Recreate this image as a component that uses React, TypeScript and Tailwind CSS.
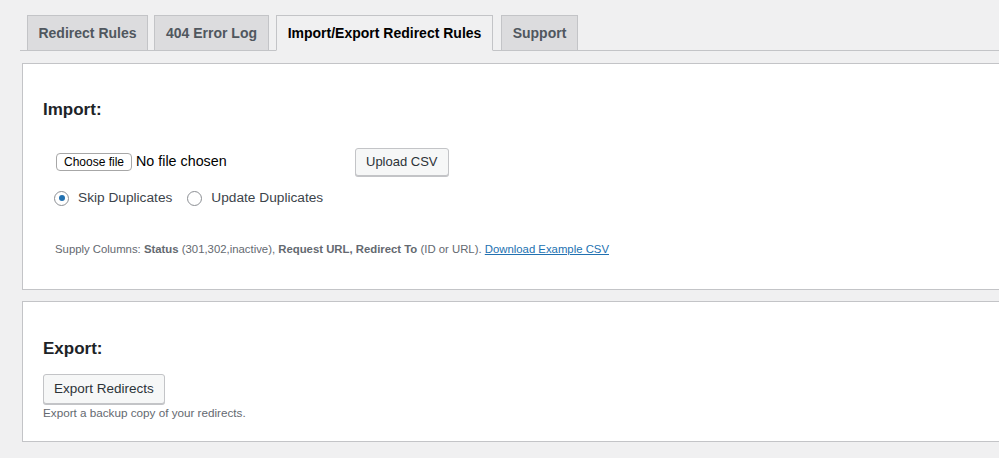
import { useState } from 'react';

const tabs = [
  { label: 'Redirect Rules', cls: 'ml-[7px] w-[121px]' },
  { label: '404 Error Log', cls: 'ml-[6px] w-[115px]' },
  { label: 'Import/Export Redirect Rules', cls: 'ml-[7px] w-[217px]' },
  { label: 'Support', cls: 'ml-[8px] w-[77px]' },
];

function Radio({ checked, label, onClick }: { checked: boolean; label: string; onClick: () => void }) {
  return (
    <label className="flex items-center cursor-pointer" onClick={onClick}>
      <span className="w-[15px] h-[15px] rounded-full border border-[#8c8f94] bg-white flex items-center justify-center">
        {checked && <span className="w-[6px] h-[6px] rounded-full bg-[#2271b1]" />}
      </span>
      <span className="ml-[9px] text-[13.7px] leading-5 text-[#3c434a]">{label}</span>
    </label>
  );
}

export default function App() {
  const [active, setActive] = useState(2);
  const [mode, setMode] = useState<'skip' | 'update'>('skip');

  return (
    <div className="min-h-screen w-full overflow-hidden bg-[#f0f0f1] font-['Liberation_Sans',Arial,sans-serif] text-[#3c434a]">
      {/* Tabs */}
      <div className="ml-[20px] pt-[15px] flex border-b border-[#c3c4c7]">
        {tabs.map((t, i) => (
          <button
            key={t.label}
            onClick={() => setActive(i)}
            className={`-mb-px h-[36px] border border-[#c3c4c7] text-[14px] font-bold leading-[24px] whitespace-nowrap text-center ${t.cls} ${
              i === active ? 'bg-[#f0f0f1] text-black border-b-[#f0f0f1]' : 'bg-[#dcdcde] text-[#50575e]'
            }`}
          >
            {t.label}
          </button>
        ))}
      </div>

      {/* Import */}
      <div className="ml-[22px] -mr-[20px] mt-[12px] bg-white border border-[#c3c4c7] pl-[20px] pt-[34px] pb-[32px]">
        <h2 className="text-[17px] font-bold leading-[24px] text-[#1d2327]">Import:</h2>

        <div className="mt-[26px] ml-[13px] flex items-center h-[28px]">
          <div className="w-[299px] flex items-center">
            <button className="h-[18px] px-[7px] border border-[#a7a7a7] rounded-[4px] bg-white text-[12px] leading-none text-black">
              Choose file
            </button>
            <span className="ml-[4px] text-[14.3px] text-black leading-5 -mt-[2px]">No file chosen</span>
          </div>
          <button className="h-[28px] px-[10px] border border-[#c3c4c7] rounded-[3px] bg-[#f6f7f7] text-[13px] text-[#2c3338] shadow-[0_1px_0_#c3c4c7]">
            Upload CSV
          </button>
        </div>

        <div className="mt-[12px] ml-[11px] flex items-center gap-[15px]">
          <Radio checked={mode === 'skip'} label="Skip Duplicates" onClick={() => setMode('skip')} />
          <Radio checked={mode === 'update'} label="Update Duplicates" onClick={() => setMode('update')} />
        </div>

        <p className="mt-[33px] ml-[12px] text-[11.35px] leading-4 text-[#646970]">
          Supply Columns: <b className="text-[#646970]">Status</b> (301,302,inactive),{' '}
          <b className="text-[#646970]">Request URL, Redirect To</b> (ID or URL).{' '}
          <a href="#" className="text-[#2271b1] underline">Download Example CSV</a>
        </p>
      </div>

      {/* Export */}
      <div className="ml-[22px] -mr-[20px] mt-[11px] bg-white border border-[#c3c4c7] pl-[20px] pt-[35px] pb-[20px]">
        <h2 className="text-[17px] font-bold leading-[24px] text-[#1d2327]">Export:</h2>
        <button className="mt-[13px] h-[30px] px-[10px] border border-[#c3c4c7] rounded-[3px] bg-[#f6f7f7] text-[13.5px] text-[#2c3338] shadow-[0_1px_0_#c3c4c7]">
          Export Redirects
        </button>
        <p className="mt-[1px] text-[11.7px] leading-4 text-[#646970]">Export a backup copy of your redirects.</p>
      </div>
    </div>
  );
}
